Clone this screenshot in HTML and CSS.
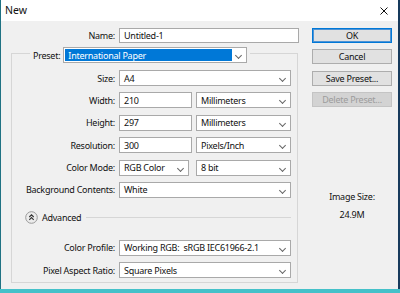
FILE: index.html
```html
<!DOCTYPE html>
<html lang="en">
<head>
    <meta charset="UTF-8">
    <title>New</title>
    <link rel="stylesheet" href="styles.css">
</head>
<body>

    <div class="window">
        <div class="titlebar">
            <span class="title">New</span>
            <svg class="close" width="8" height="8" viewBox="0 0 8 8">
                <path d="M0.5 0.5 L7.5 7.5 M7.5 0.5 L0.5 7.5" stroke="#111" stroke-width="1" fill="none"/>
            </svg>
        </div>

        <div class="dialog">
            <div class="main">
                <div class="row name-row">
                    <span class="label name-label">Name:</span>
                    <span class="field name-field">Untitled-1</span>
                </div>

                <fieldset class="group">
                    <legend class="preset">
                        <span class="label">Preset:</span>
                        <span class="select preset-select">
                            <span class="selected">International Paper</span>
                            <span class="chevron"></span>
                        </span>
                    </legend>

                    <div class="rows">
                        <div class="row">
                            <span class="label">Size:</span>
                            <span class="select full">A4<span class="chevron"></span></span>
                        </div>
                        <div class="row">
                            <span class="label">Width:</span>
                            <span class="field num">210</span>
                            <span class="select unit">Millimeters<span class="chevron"></span></span>
                        </div>
                        <div class="row">
                            <span class="label">Height:</span>
                            <span class="field num">297</span>
                            <span class="select unit">Millimeters<span class="chevron"></span></span>
                        </div>
                        <div class="row">
                            <span class="label">Resolution:</span>
                            <span class="field num">300</span>
                            <span class="select unit">Pixels/Inch<span class="chevron"></span></span>
                        </div>
                        <div class="row">
                            <span class="label">Color Mode:</span>
                            <span class="select mode">RGB Color<span class="chevron"></span></span>
                            <span class="select unit bits">8 bit<span class="chevron"></span></span>
                        </div>
                        <div class="row">
                            <span class="label">Background Contents:</span>
                            <span class="select full">White<span class="chevron"></span></span>
                        </div>
                    </div>

                    <div class="advanced">
                        <svg class="adv-icon" width="13" height="13" viewBox="0 0 13 13">
                            <circle cx="6.5" cy="6.5" r="5.8" fill="#ececec" stroke="#9a9a9a" stroke-width="1"/>
                            <path d="M4.3 6 L6.5 3.8 L8.7 6 M4.3 8.8 L6.5 6.6 L8.7 8.8" stroke="#333" stroke-width="1.1" fill="none"/>
                        </svg>
                        <span class="adv-text">Advanced</span>
                        <span class="adv-line"></span>
                    </div>

                    <div class="rows">
                        <div class="row">
                            <span class="label">Color Profile:</span>
                            <span class="select full">Working RGB:&nbsp; sRGB IEC61966-2.1<span class="chevron"></span></span>
                        </div>
                        <div class="row">
                            <span class="label">Pixel Aspect Ratio:</span>
                            <span class="select full">Square Pixels<span class="chevron"></span></span>
                        </div>
                    </div>
                </fieldset>
            </div>

            <div class="side">
                <button class="btn default">OK</button>
                <button class="btn">Cancel</button>
                <button class="btn">Save Preset...</button>
                <button class="btn" disabled>Delete Preset...</button>

                <div class="image-size">
                    <div>Image Size:</div>
                    <div class="size-value">24.9M</div>
                </div>
            </div>
        </div>
    </div>

</body>
</html>
```

FILE: styles.css
```css
html, body {
    margin: 0;
    padding: 0;
}

body {
    font-family: 'Noto Sans', 'Open Sans', sans-serif;
    font-size: 9px;
    letter-spacing: -0.25px;
    color: #111;
    background: #45c1c9;
    width: 400px;
    height: 293px;
    overflow: hidden;
}

.window {
    width: 397px;
    height: 289px;
    background: #f0f0f0;
    border-left: 1px solid #1f7283;
    border-right: 2px solid #173a5c;
}

.titlebar {
    height: 21px;
    background: #fff;
    display: flex;
    align-items: center;
    justify-content: space-between;
    padding: 0 10px 0 4px;
}

.title {
    font-size: 10.5px;
    letter-spacing: 0;
    margin-top: -1px;
}

.dialog {
    display: flex;
}

.main {
    width: 299px;
}

/* Rows of label + control */
.row {
    display: flex;
    align-items: center;
    height: 16px;
    gap: 4px;
}

.label {
    width: 103px;
    text-align: right;
    white-space: nowrap;
}

.name-row {
    margin-top: 7px;
    height: 15px;
}

.name-label {
    width: 114px;
}

.field, .select {
    box-sizing: border-box;
    height: 100%;
    background: #fff;
    border: 1px solid #a9a9a9;
    padding: 0 4px;
    display: flex;
    align-items: center;
    white-space: nowrap;
    position: relative;
}

.name-field {
    width: 180px;
}

.num {
    width: 73px;
}

.full {
    width: 172px;
}

.unit {
    width: 95px;
}

.mode {
    width: 70px;
}

.bits {
    margin-left: 3px;
}

.chevron {
    position: absolute;
    right: 5px;
    top: 5px;
    width: 4px;
    height: 4px;
    border-right: 1px solid #666;
    border-bottom: 1px solid #666;
    transform: rotate(45deg);
}

/* Group box */
.group {
    margin: 0 0 0 10px;
    padding: 0 0 4px 0;
    width: 287px;
    box-sizing: border-box;
    border: 1px solid #d6d6d6;
}

.preset {
    display: flex;
    align-items: center;
    gap: 3px;
    margin-left: 18px;
    padding: 4px 3px 0 3px;
    height: 16px;
}

.preset .label {
    width: auto;
}

.preset-select {
    width: 184px;
    padding: 1px 14px 1px 1px;
}

.selected {
    flex: 1;
    height: 100%;
    background: #0078d7;
    color: #fff;
    display: flex;
    align-items: center;
    padding-left: 3px;
}

.rows {
    display: flex;
    flex-direction: column;
    gap: 6.4px;
}

.rows:first-of-type {
    margin-top: 7px;
}

.advanced {
    display: flex;
    align-items: center;
    height: 16px;
    margin: 12px 6px 14px 13px;
}

.adv-text {
    margin: 0 5px 0 4px;
}

.adv-line {
    flex: 1;
    border-top: 1px solid #d6d6d6;
}

/* Buttons column */
.side {
    width: 80px;
    margin-left: 12px;
    padding-top: 7px;
    display: flex;
    flex-direction: column;
    gap: 6.3px;
}

.btn {
    font-family: inherit;
    font-size: 9px;
    letter-spacing: inherit;
    color: #111;
    height: 15px;
    padding: 0;
    background: #e1e1e1;
    border: 1px solid #adadad;
}

.btn.default {
    border-color: #0078d7;
    box-shadow: inset 0 0 0 1px #4f93d4;
}

.btn:disabled {
    background: #d3d3d3;
    border-color: #c4c4c4;
    color: #9c9c9c;
}

.image-size {
    margin-top: 75px;
    text-align: center;
    line-height: 18px;
}
```
